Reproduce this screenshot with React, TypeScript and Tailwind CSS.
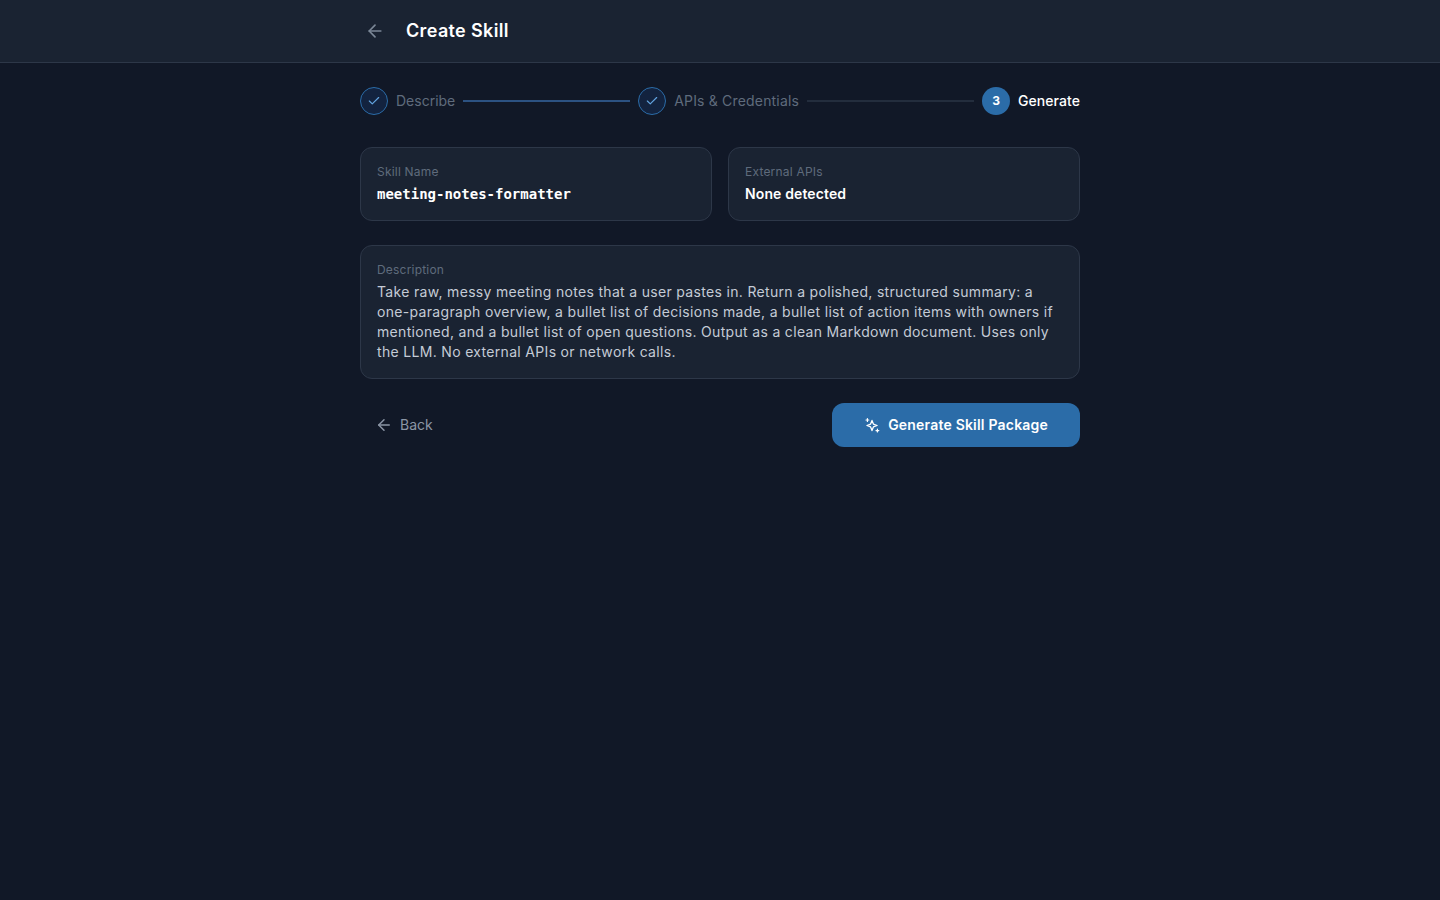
import { ArrowLeft, Check } from "lucide-react";

const sans = "font-['Inter','Liberation_Sans',sans-serif]";

function DoneStep({ label, tracking }: { label: string; tracking: string }) {
  return (
    <div className="flex items-center gap-2">
      <div className="flex h-7 w-7 items-center justify-center rounded-full border border-[#2b6ca8] bg-[#13233f] text-[#63a4e0]">
        <Check size={14} strokeWidth={2} />
      </div>
      <span className={`text-sm text-[#5f6b7c] ${tracking}`}>{label}</span>
    </div>
  );
}

function SparkIcon() {
  return (
    <svg width="16" height="16" viewBox="0 0 16 16" fill="none" stroke="currentColor" strokeLinecap="round" strokeLinejoin="round">
      <path strokeWidth="1.3" d="M8 3.4L9.4 7.1L13.1 8.5L9.4 9.9L8 13.6L6.6 9.9L2.9 8.5L6.6 7.1Z" />
      <path strokeWidth="1.2" d="M3.4 1.6V4.4M2 3H4.8M13.4 12.2V15M12 13.6H14.8" />
    </svg>
  );
}

export default function App() {
  return (
    <div className={`min-h-[900px] bg-[#111827] ${sans}`}>
      <header className="h-[63px] border-b border-[#2d3748] bg-[#1a2332]">
        <div className="mx-auto flex h-full w-[720px] items-center gap-[21px]">
          <div className="flex w-[25px] justify-end text-[#7b8797]">
            <ArrowLeft size={20} strokeWidth={2} />
          </div>
          <h1 className="text-lg font-semibold leading-7 tracking-[0.35px] text-white">Create Skill</h1>
        </div>
      </header>
      <main className="mx-auto w-[720px] pt-6">
        <div className="flex items-center gap-2">
          <DoneStep label="Describe" tracking="tracking-[0px]" />
          <div className="h-0.5 flex-1 bg-[#2c5282]" />
          <DoneStep label="APIs & Credentials" tracking="tracking-[0.18px]" />
          <div className="h-0.5 flex-1 bg-[#232d3d]" />
          <div className="flex items-center gap-2">
            <div className="flex h-7 w-7 items-center justify-center rounded-full bg-[#2b6ca8] text-xs font-bold text-white">3</div>
            <span className="text-sm font-medium tracking-[0.06px] text-white">Generate</span>
          </div>
        </div>
        <div className="mt-8 grid grid-cols-2 gap-4">
          <div className="h-[74px] rounded-xl border border-[#2d3748] bg-[#1a2332] px-4 pt-4">
            <div className="text-xs leading-4 tracking-[0.2px] text-[#5f6b7c]">Skill Name</div>
            <div className="mt-1 font-['DejaVu_Sans_Mono',monospace] text-sm font-bold leading-5 text-white">meeting-notes-formatter</div>
          </div>
          <div className="h-[74px] rounded-xl border border-[#2d3748] bg-[#1a2332] px-4 pt-4">
            <div className="text-xs leading-4 tracking-[0.2px] text-[#5f6b7c]">External APIs</div>
            <div className="mt-1 text-sm font-semibold leading-5 tracking-[0.12px] text-white">None detected</div>
          </div>
        </div>
        <div className="mt-6 h-[134px] rounded-xl border border-[#2d3748] bg-[#1a2332] px-4 pt-4">
          <div className="text-xs leading-4 tracking-[0.2px] text-[#5f6b7c]">Description</div>
          <p className="mt-1 text-sm leading-5 tracking-[0.32px] text-[#c4cbd6]">
            Take raw, messy meeting notes that a user pastes in. Return a polished, structured summary: a one-paragraph overview, a bullet list of decisions made, a bullet list of action items with owners if mentioned, and a bullet list of open questions. Output as a clean Markdown document. Uses only the LLM. No external APIs or network calls.
          </p>
        </div>
        <div className="mt-6 flex items-center justify-between">
          <div className="flex items-center gap-[7px] px-[15px] text-sm text-[#8b95a5]">
            <ArrowLeft size={18} strokeWidth={2} />
            <span>Back</span>
          </div>
          <div className="flex h-11 items-center gap-2 rounded-xl bg-[#2b6ca8] px-8 text-sm font-semibold tracking-[0.2px] text-white">
            <SparkIcon />
            <span>Generate Skill Package</span>
          </div>
        </div>
      </main>
    </div>
  );
}
